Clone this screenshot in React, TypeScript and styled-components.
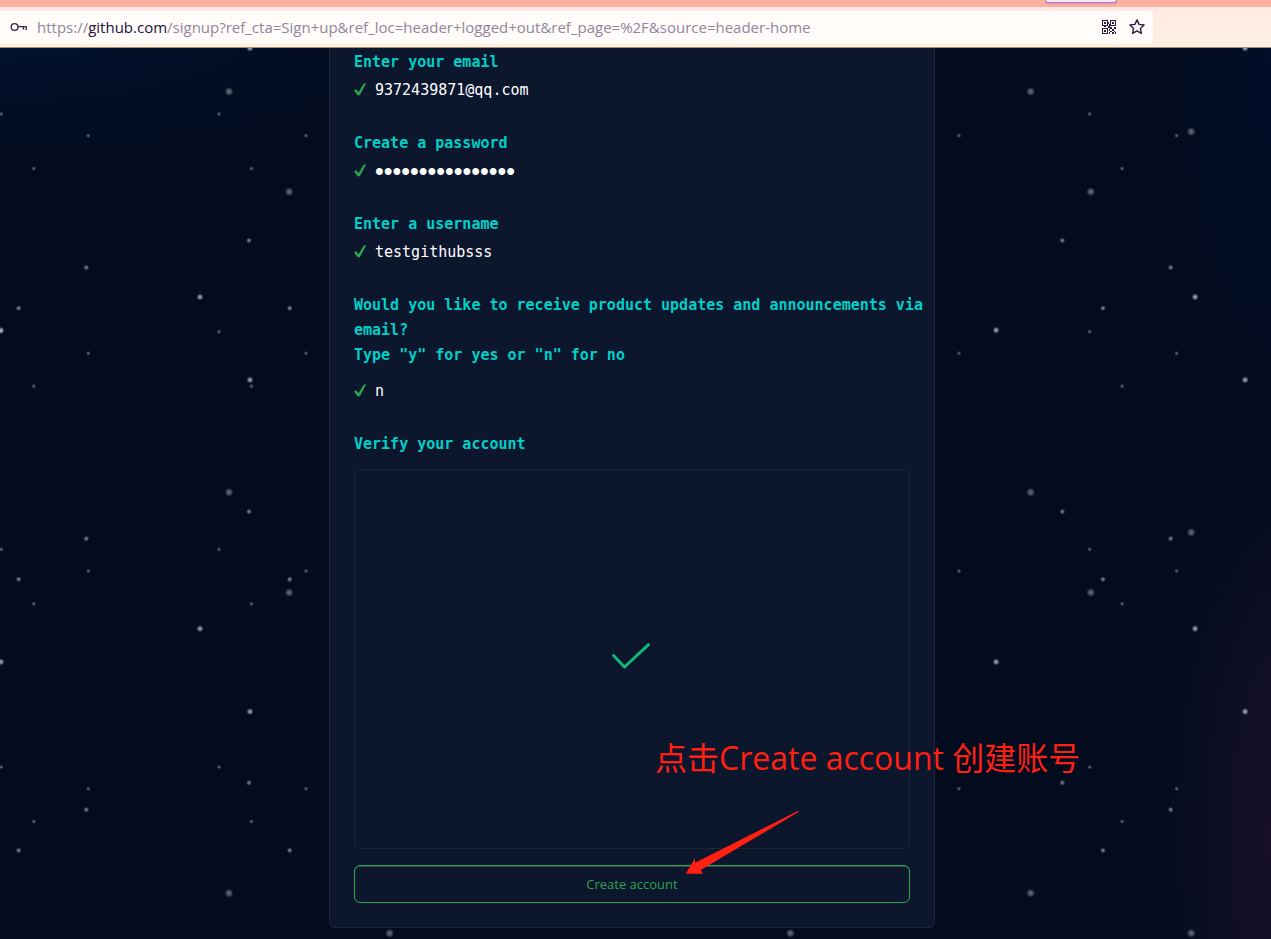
import React from "react";
import styled, { createGlobalStyle } from "styled-components";

const mono = `"DejaVu Sans Mono", monospace`;
const sans = `"Open Sans", "Noto Sans", "Noto Sans CJK SC", sans-serif`;

const GlobalStyle = createGlobalStyle`
  * { box-sizing: border-box; }
  body { margin: 0; background: #030c1f; font-family: ${sans}; }
`;

const Page = styled.div`
  display: flex;
  flex-direction: column;
  min-height: 100vh;
`;

const TabStrip = styled.div`
  display: flex;
  justify-content: flex-end;
  height: 7px;
  padding-right: 154px;
  background: #ffb0a0;
`;

const ActiveTab = styled.div`
  width: 72px;
  height: 3px;
  border: 1px solid #a873f5;
  border-top: 0;
  border-radius: 0 0 4px 4px;
  background: #fbe9f4;
  box-shadow: 0 1px 2px #a0606055;
`;

const Toolbar = styled.header`
  display: flex;
  align-items: center;
  height: 41px;
  padding-right: 118px;
  background: linear-gradient(#ffeae4, #fff1e2);
  border-bottom: 1px solid #b08a72;
`;

const AddressBar = styled.div`
  display: flex;
  flex: 1;
  align-items: center;
  height: 32px;
  min-width: 0;
  padding: 0 2px 0 10px;
  border-radius: 0 4px 4px 0;
  background: #fffcfa;
`;

const Url = styled.div`
  flex: 1;
  min-width: 0;
  margin-left: 9px;
  overflow: hidden;
  color: #8f879b;
  font-size: 15px;
  line-height: 24px;
  white-space: nowrap;
`;

const Host = styled.span`
  color: #20123a;
`;

const IconButton = styled.button`
  display: grid;
  place-items: center;
  width: 28px;
  height: 28px;
  padding: 0;
  border: 0;
  background: none;
  color: #2b1d45;
`;

const Main = styled.main`
  position: relative;
  display: flex;
  flex: 1;
  justify-content: center;
  align-items: flex-start;
  padding: 0 7px 11px 0;
  overflow: hidden;
  background:
    radial-gradient(ellipse 440px 140px at 0 -30px, #021331 0%, #02133100 100%),
    radial-gradient(ellipse 100px 320px at 100% 0, #020f2a 0%, #020f2a00 100%),
    radial-gradient(ellipse 140px 400px at 102% 790px, #1c1229 0%, #1a112800 100%),
    #030c1f;
`;

const Sky = styled.svg`
  position: absolute;
  inset: 0;
  width: 100%;
  height: 100%;
`;

const Card = styled.form`
  position: relative;
  width: 606px;
  padding: 2px 24px 24px;
  border: 1px solid #1f2637;
  border-top: 0;
  border-radius: 0 0 6px 6px;
  background: #0c162d;
`;

const Field = styled.div`
  margin-bottom: 26px;
`;

const Prompt = styled.label<{ $gap?: number }>`
  display: block;
  margin-bottom: ${(p) => p.$gap ?? 0}px;
  color: #00cfc8;
  font: bold 15px/25px ${mono};
  white-space: nowrap;
`;

const Answer = styled.div`
  display: flex;
  align-items: center;
  gap: 8px;
  height: 30px;
`;

const Entry = styled.input`
  flex: 1;
  min-width: 0;
  height: 30px;
  padding: 0;
  border: 0;
  outline: 0;
  background: none;
  color: #ffffff;
  font: 15px/30px ${mono};

  &[type="password"] {
    font: 25px/30px "Liberation Sans", sans-serif;
  }
`;

const Verify = styled.section`
  display: grid;
  place-items: center;
  height: 380px;
  margin: 12px 0 16px;
  border: 1px solid #1c2535;
  border-radius: 6px;
`;

const Submit = styled.button`
  display: block;
  width: 100%;
  height: 38px;
  border: 1px solid #2da44e;
  border-radius: 6px;
  background: none;
  box-shadow: inset 0 1px 0 #3a4454;
  color: #2da44e;
  font: 13px/20px ${sans};
`;

const Note = styled.p`
  position: absolute;
  top: 686px;
  left: 325px;
  margin: 0;
  color: #ff2012;
  font-size: 32px;
  line-height: 48px;
  white-space: nowrap;
`;

const Arrow = styled.svg`
  position: absolute;
  top: 762px;
  left: 355px;
`;

type Layer = { id: string; size: number; r: number; opacity: number; stars: number[][] };

const layers: Layer[] = [
  { id: "dust", size: 217.67, r: 2.2, opacity: 0.45, stars: [[1.3, 66], [88.3, 87.7], [33.8, 120.5]] },
  { id: "mid", size: 271.1, r: 2.8, opacity: 0.56, stars: [[249, 192.5], [86.3, 219.5], [18.6, 260.2]] },
  { id: "bright", size: 331.7, r: 3.4, opacity: 0.72, stars: [[250, 0.2], [200, 249], [1, 282.2]] },
  { id: "halo", size: 400.8, r: 4.4, opacity: 0.44, stars: [[229, 43.5], [289.2, 143.7], [389.6, 83.6]] },
];

const StarField = () => (
  <Sky aria-hidden="true">
    <defs>
      <radialGradient id="glow">
        <stop offset="0" stopColor="#e4e4e8" />
        <stop offset="0.45" stopColor="#e4e4e8" stopOpacity="0.75" />
        <stop offset="1" stopColor="#e4e4e8" stopOpacity="0" />
      </radialGradient>
      {layers.map((l) => (
        <pattern key={l.id} id={l.id} x={-6} y={-6} width={l.size} height={l.size} patternUnits="userSpaceOnUse">
          {l.stars.map(([x, y]) => (
            <circle key={x} cx={x + 6} cy={y + 6} r={l.r} fill="url(#glow)" opacity={l.opacity} />
          ))}
        </pattern>
      ))}
    </defs>
    {layers.map((l) => (
      <rect key={l.id} width="100%" height="100%" fill={`url(#${l.id})`} />
    ))}
  </Sky>
);

const KeyIcon = () => (
  <svg width="18" height="12" viewBox="0 0 18 12" fill="none" stroke="#38294f" strokeWidth="1.4">
    <circle cx="4.6" cy="6" r="3.4" />
    <path d="M8 5.6h8.6M13.4 5.6v3M16.2 5.6v3.4" />
  </svg>
);

const QrIcon = () => (
  <svg width="14" height="14" viewBox="0 0 14 14" fill="currentColor" shapeRendering="crispEdges">
    <path
      fillRule="evenodd"
      d="M0 0h6v6H0zM1 1v4h4V1zM8 0h6v6H8zM9 1v4h4V1zM0 8h6v6H0zM1 9v4h4V9zM2 2h2v2H2zM10 2h2v2h-2zM2 10h2v2H2zM6 2h1v2H6zM7 4h1v2H7zM6 6h2v2H6zM2 6h2v1H2zM8 7h2v2H8zM10 9h2v2h-2zM12 7h2v2h-2zM8 11h2v1H8zM7 9h1v2H7zM12 11h1v1h-1zM10 12h2v2h-2zM13 12h1v2h-1zM7 12h1v2H7z"
    />
  </svg>
);

const StarIcon = () => (
  <svg width="18" height="18" viewBox="0 0 18 18" fill="none" stroke="currentColor" strokeWidth="1.4" strokeLinejoin="round">
    <path d="M9 1.9l2.1 4.5 5 .6-3.7 3.400 1 4.900L9 12.900l-4.400 2.400 1-4.900L1.900 7l5-.6z" />
  </svg>
);

const Tick = () => (
  <svg width="13" height="14" viewBox="0 0 13 14" fill="#2da44e" aria-hidden="true">
    <path d="M0 7.400 2.300 6.200 4.500 9.200 9.600 .7 12.200 .2 5.800 12.300 3.600 12.300z" />
  </svg>
);

type Question = { id: string; type: string; value: string; gap?: number; prompt: React.ReactNode };

const questions: Question[] = [
  { id: "email", type: "email", value: "9372439871@qq.com", prompt: "Enter your email" },
  { id: "password", type: "password", value: "testpassword1234", prompt: "Create a password" },
  { id: "login", type: "text", value: "testgithubsss", prompt: "Enter a username" },
  {
    id: "opt-in",
    type: "text",
    value: "n",
    gap: 8,
    prompt: (
      <>
        Would you like to receive product updates and announcements via
        <br />
        email?
        <br />
        Type "y" for yes or "n" for no
      </>
    ),
  },
];

export default function App() {
  return (
    <Page>
      <GlobalStyle />
      <TabStrip>
        <ActiveTab />
      </TabStrip>
      <Toolbar>
        <AddressBar>
          <KeyIcon />
          <Url>
            https://<Host>github.com</Host>
            /signup?ref_cta=Sign+up&amp;ref_loc=header+logged+out&amp;ref_page=%2F&amp;source=header-home
          </Url>
          <IconButton type="button" aria-label="QR code">
            <QrIcon />
          </IconButton>
          <IconButton type="button" aria-label="Bookmark">
            <StarIcon />
          </IconButton>
        </AddressBar>
      </Toolbar>
      <Main>
        <StarField />
        <Card onSubmit={(e) => e.preventDefault()}>
          {questions.map((q) => (
            <Field key={q.id}>
              <Prompt htmlFor={q.id} $gap={q.gap}>
                {q.prompt}
              </Prompt>
              <Answer>
                <Tick />
                <Entry id={q.id} type={q.type} defaultValue={q.value} autoComplete="off" spellCheck={false} />
              </Answer>
            </Field>
          ))}
          <Prompt as="h2" id="verify-title">
            Verify your account
          </Prompt>
          <Verify aria-labelledby="verify-title">
            <svg width="42" height="32" viewBox="0 0 42 32" fill="none" stroke="#12b878" strokeWidth="3" strokeLinecap="round">
              <path d="M2.500 12.500 13.500 24 37.500 1.700" />
            </svg>
          </Verify>
          <Submit type="submit">Create account</Submit>
          <Note>点击Create account 创建账号</Note>
          <Arrow width="116" height="66" viewBox="0 0 116 66" fill="#ff2012" aria-hidden="true">
            <path d="M.700 63.700 10 48.300V52.700L113.300.700 114 1.700 15.700 60 18 63.700z" />
          </Arrow>
        </Card>
      </Main>
    </Page>
  );
}
